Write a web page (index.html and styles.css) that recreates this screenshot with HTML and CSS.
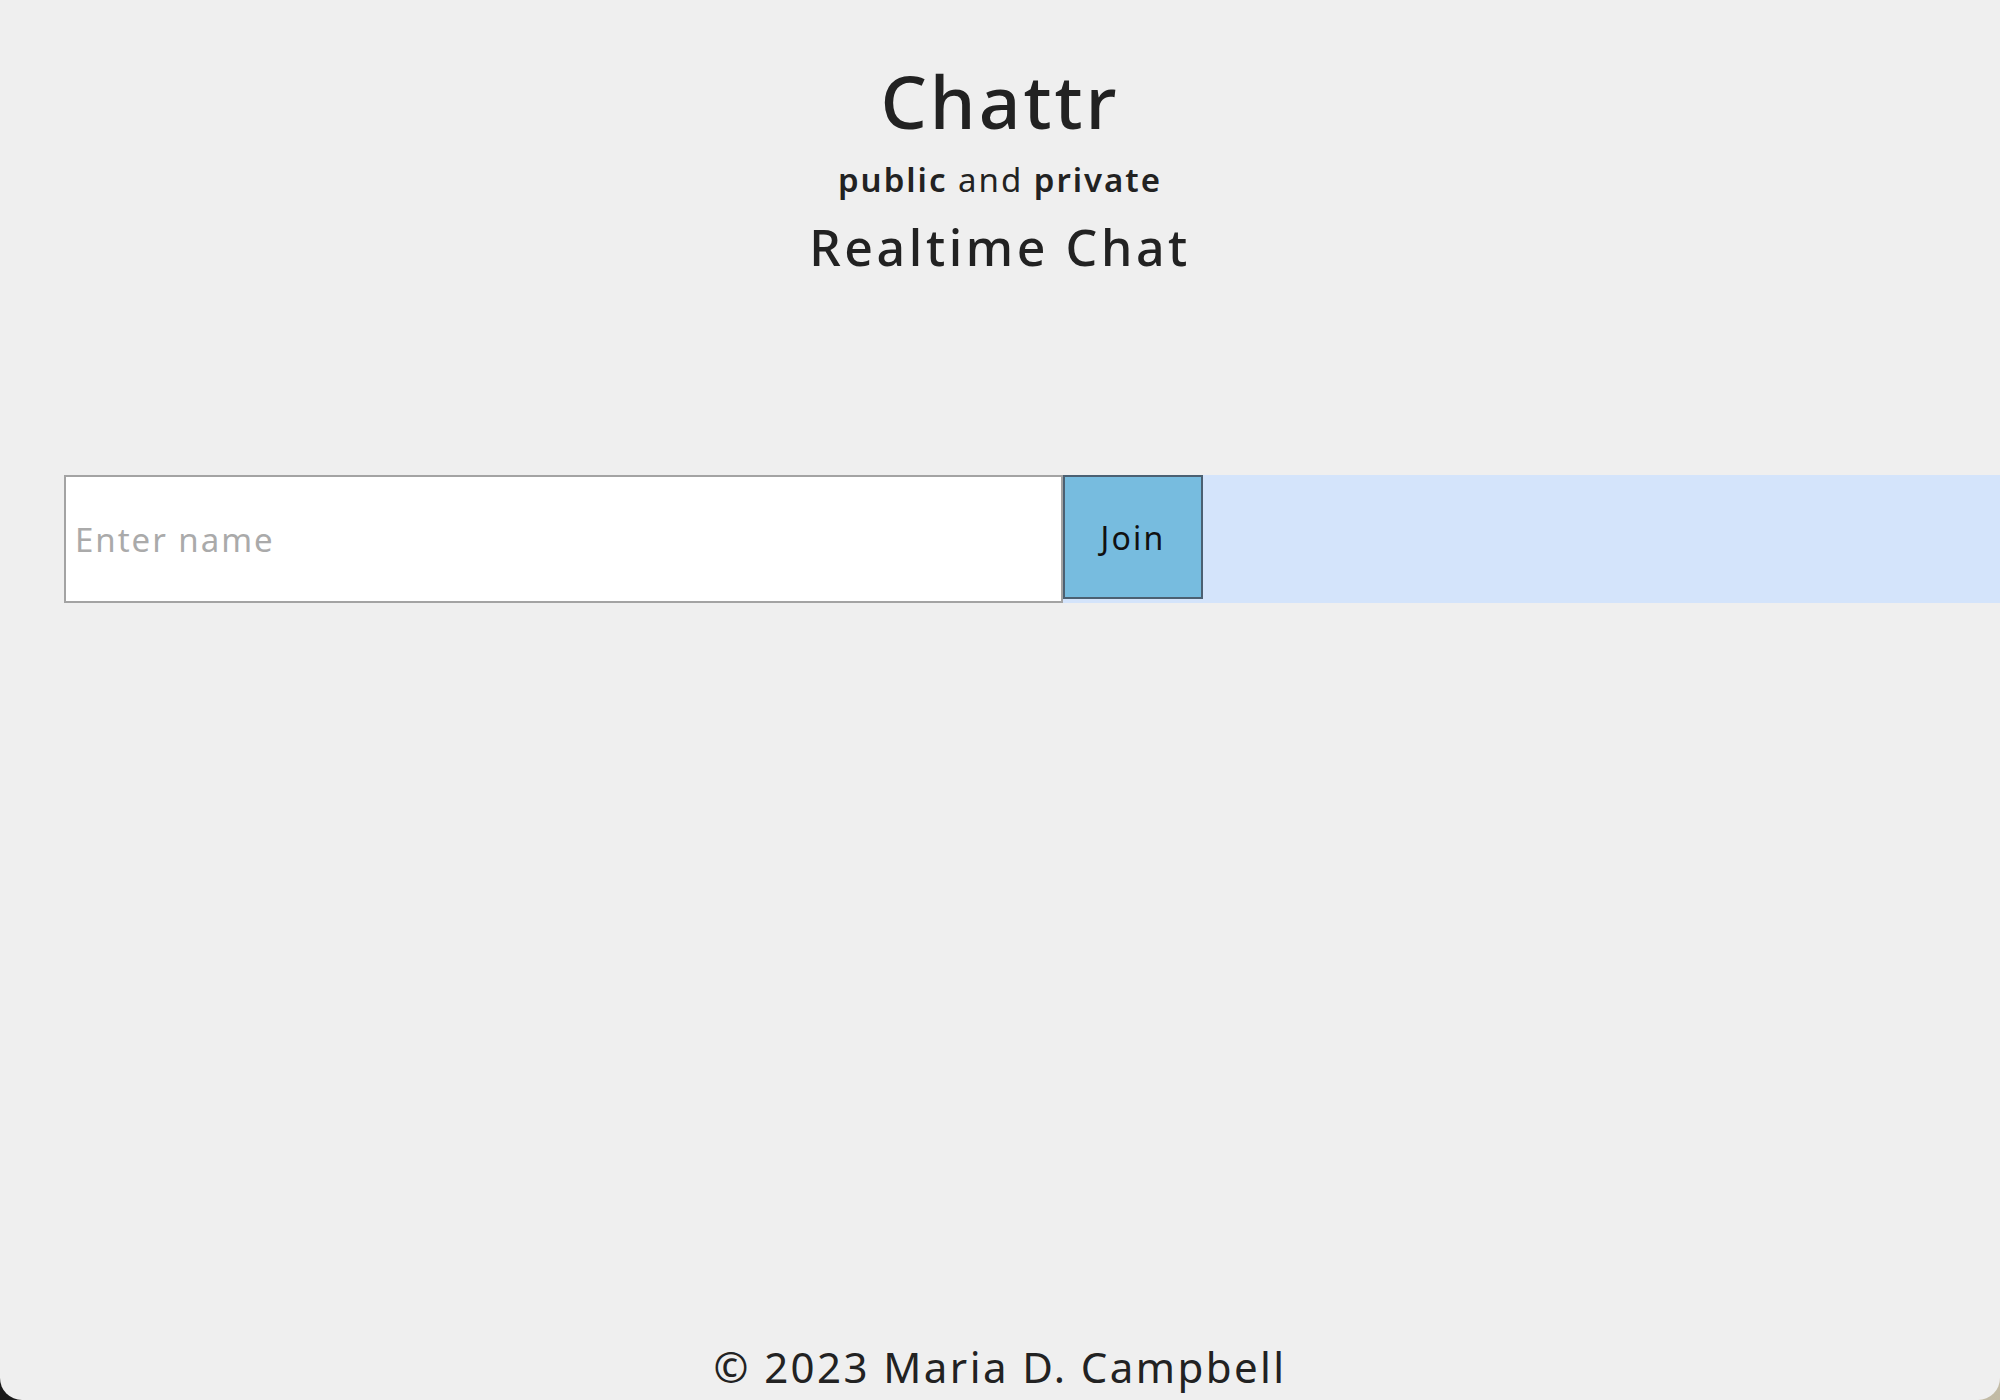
FILE: index.html
```html
<!DOCTYPE html>
<html lang="en">
<head>
<meta charset="utf-8">
<title>Chattr</title>
<link rel="stylesheet" href="styles.css">
</head>
<body>
<div class="page">
  <header class="header">
    <h1 class="title">Chattr</h1>
    <p class="subtitle"><strong>public</strong> and <strong>private</strong></p>
    <h2 class="tagline">Realtime Chat</h2>
  </header>
  <main class="main">
    <form class="join-form">
      <input class="name-input" type="text" placeholder="Enter name">
      <button class="join-button" type="button">Join</button>
    </form>
  </main>
  <footer class="footer">© 2023 Maria D. Campbell</footer>
</div>
</body>
</html>
```

FILE: styles.css
```css
html, body {
  margin: 0;
  padding: 0;
  overflow: hidden;
}
html {
  background: linear-gradient(to right, #1a1a1a 0%, #6d6a60 50%, #c2bba5 100%);
}
body {
  color: #222222;
  font-family: "Noto Sans", "Open Sans", sans-serif;
}
.page {
  display: flex;
  flex-direction: column;
  min-height: 100vh;
  box-sizing: border-box;
  background: #efefef;
  border-radius: 0 0 22px 22px;
  overflow: hidden;
}
.header {
  text-align: center;
  padding-top: 64px;
}
.title {
  margin: 0;
  font-size: 73px;
  line-height: 73px;
  font-weight: 500;
  letter-spacing: 0.042em;
}
.subtitle {
  margin: 26px 0 0;
  font-size: 33px;
  line-height: 33px;
  font-weight: 400;
  letter-spacing: 0.06em;
}
.subtitle strong {
  font-weight: 600;
}
.tagline {
  margin: 26px 0 0;
  font-size: 50px;
  line-height: 50px;
  font-weight: 500;
  letter-spacing: 0.072em;
}
.main {
  padding-top: 203px;
}
.join-form {
  display: flex;
  align-items: flex-start;
  margin: 0 0 0 64px;
  height: 128px;
  background: #d4e4fb;
}
.name-input {
  box-sizing: border-box;
  width: 999px;
  height: 128px;
  margin: 0;
  padding: 0 0 0 9px;
  border: 2px solid #a3a3a3;
  background: #ffffff;
  font-family: "Noto Sans", "Open Sans", sans-serif;
  font-size: 33px;
  letter-spacing: 0.06em;
  color: #222;
  outline: none;
}
.name-input::placeholder {
  color: #aaaaaa;
}
.join-button {
  box-sizing: border-box;
  width: 140px;
  height: 124px;
  margin: 0;
  padding: 0;
  border: 2px solid #4b6072;
  background: #77bcdf;
  color: #111111;
  font-family: "Noto Sans", "Open Sans", sans-serif;
  font-size: 32px;
  letter-spacing: 0.07em;
}
.footer {
  margin-top: auto;
  text-align: center;
  font-size: 42px;
  line-height: 50px;
  letter-spacing: 0.058em;
  padding-bottom: 8px;
}
```
